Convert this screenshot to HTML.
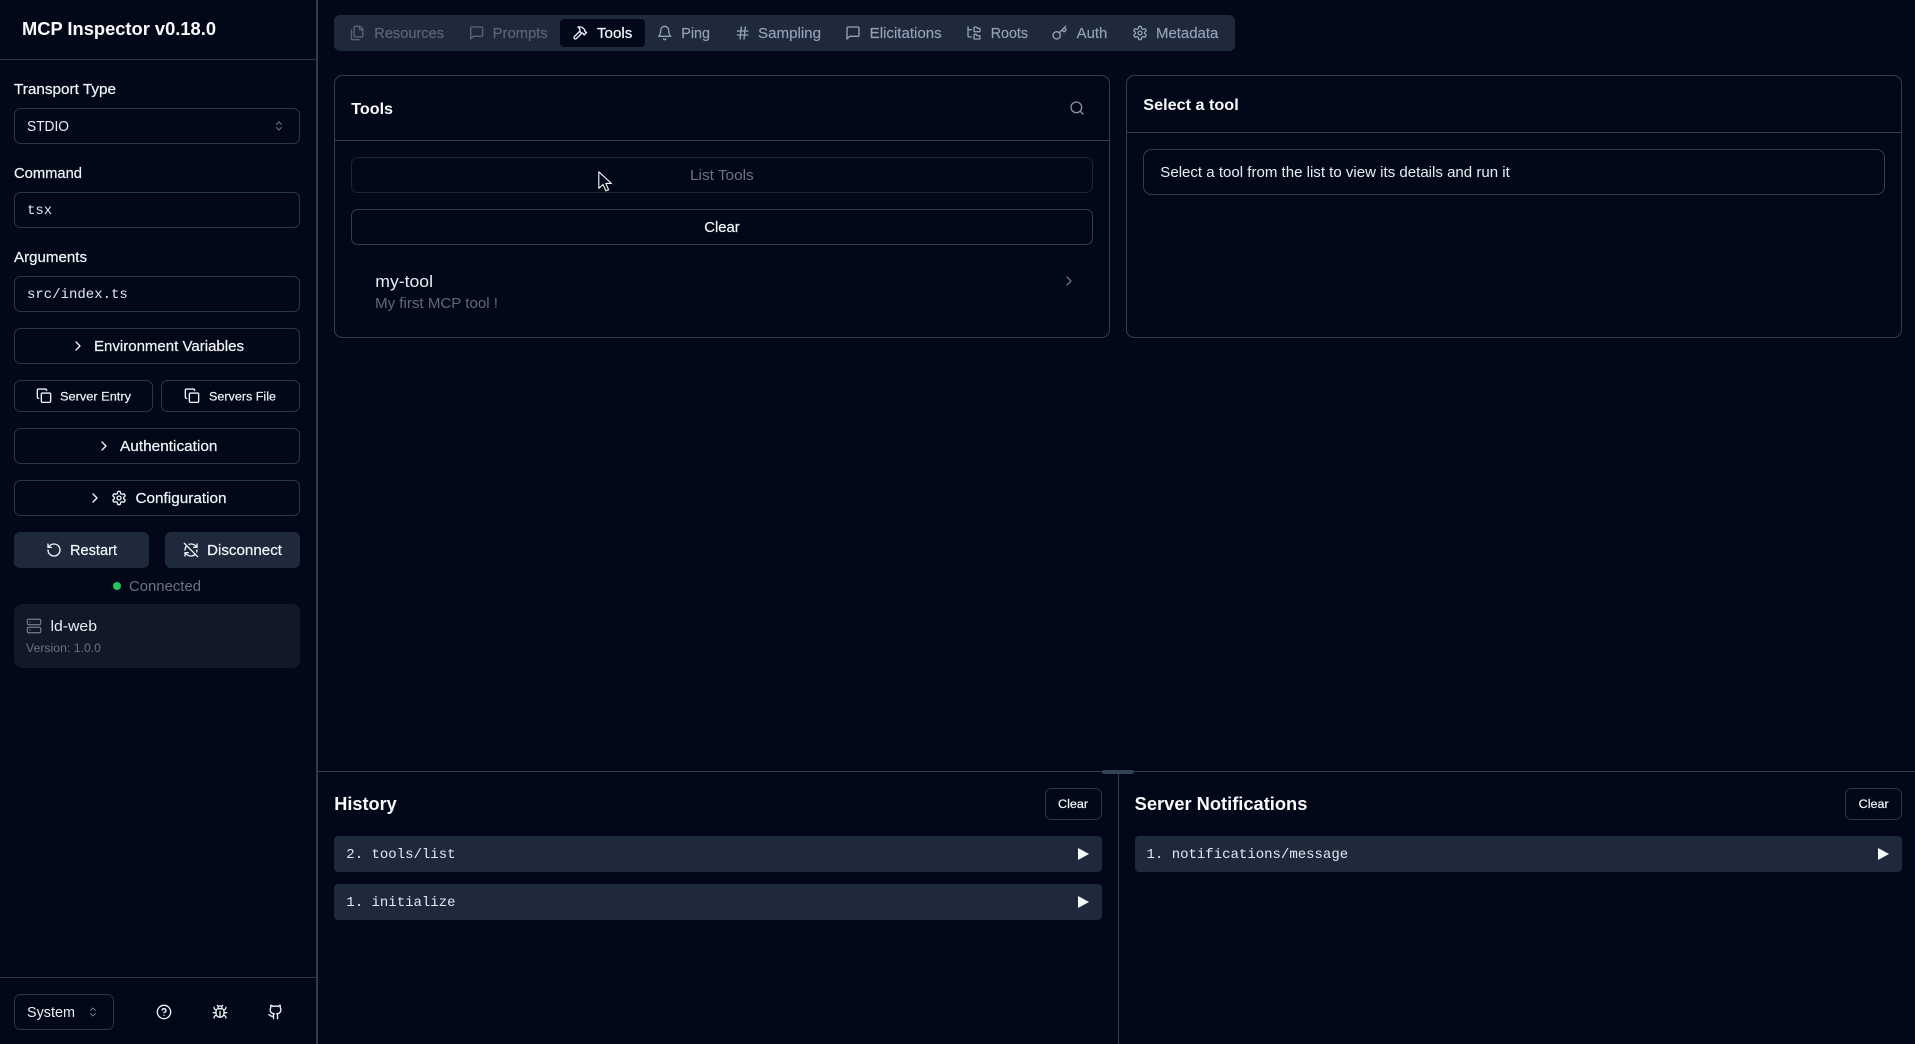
<!DOCTYPE html>
<html lang="en"><head><meta charset="utf-8"><title>MCP Inspector</title>
<style>
html,body{margin:0;padding:0;background:#020817;width:1915px;height:1044px;overflow:hidden}
svg{display:block}
text{font-family:"Liberation Sans",sans-serif;font-size:14.4px;fill:#e9eef4}
text.m{fill:#f1f5f9;stroke:#f1f5f9;stroke-width:.2px}
text.b{font-weight:700;fill:#f8fafc}
text.mono{font-family:"Liberation Mono",monospace;font-size:14px;fill:#e2e8f0}
text.s{font-size:12.3px}
.t{fill:#94a3b8;stroke:#94a3b8;stroke-width:.15px}
text.t{fill:#94a3b8}
text.td{fill:#5a6779;stroke:#5a6779;stroke-width:.15px}
.box{fill:none;stroke:#2b3647}
.card{fill:none;stroke:#323d50}
.ic{fill:none;stroke:currentColor;stroke-width:2;stroke-linecap:round;stroke-linejoin:round}
</style></head><body>
<svg xmlns="http://www.w3.org/2000/svg" width="1915" height="1044" viewBox="0 0 1915 1044">
<defs>
<symbol id="copy" viewBox="0 0 24 24"><rect class="ic" x="8" y="8" width="14" height="14" rx="2"/><path class="ic" d="M4 16c-1.1 0-2-.9-2-2V4c0-1.1.9-2 2-2h10c1.1 0 2 .9 2 2"/></symbol>
<symbol id="chev" viewBox="0 0 24 24"><path class="ic" d="m9 18 6-6-6-6"/></symbol>
<symbol id="updown" viewBox="0 0 24 24"><path class="ic" d="m7 15 5 5 5-5M7 9l5-5 5 5"/></symbol>
<symbol id="gear" viewBox="0 0 24 24"><path class="ic" d="M12.22 2h-.44a2 2 0 0 0-2 2v.18a2 2 0 0 1-1 1.73l-.43.25a2 2 0 0 1-2 0l-.15-.08a2 2 0 0 0-2.73.73l-.22.38a2 2 0 0 0 .73 2.73l.15.1a2 2 0 0 1 1 1.72v.51a2 2 0 0 1-1 1.74l-.15.09a2 2 0 0 0-.73 2.73l.22.38a2 2 0 0 0 2.73.73l.15-.08a2 2 0 0 1 2 0l.43.25a2 2 0 0 1 1 1.73V20a2 2 0 0 0 2 2h.44a2 2 0 0 0 2-2v-.18a2 2 0 0 1 1-1.73l.43-.25a2 2 0 0 1 2 0l.15.08a2 2 0 0 0 2.73-.73l.22-.39a2 2 0 0 0-.73-2.73l-.15-.08a2 2 0 0 1-1-1.74v-.5a2 2 0 0 1 1-1.74l.15-.09a2 2 0 0 0 .73-2.73l-.22-.38a2 2 0 0 0-2.73-.73l-.15.08a2 2 0 0 1-2 0l-.43-.25a2 2 0 0 1-1-1.73V4a2 2 0 0 0-2-2z"/><circle class="ic" cx="12" cy="12" r="3"/></symbol>
<symbol id="restart" viewBox="0 0 24 24"><path class="ic" d="M3 12a9 9 0 1 0 9-9 9.75 9.75 0 0 0-6.74 2.74L3 8"/><path class="ic" d="M3 3v5h5"/></symbol>
<symbol id="off" viewBox="0 0 24 24"><path class="ic" d="M21 8 18.74 5.74A9.75 9.75 0 0 0 12 3C11 3 10.03 3.16 9.13 3.47M8 16H3v5M3 12C3 9.51 4 7.26 5.64 5.64M3 16l2.26 2.26A9.75 9.75 0 0 0 12 21c2.49 0 4.74-1 6.36-2.64M21 12c0 1-.16 1.97-.47 2.87M21 3v5h-5M22 22 2 2"/></symbol>
<symbol id="server" viewBox="0 0 24 24"><rect class="ic" x="2" y="2" width="20" height="8" rx="2"/><rect class="ic" x="2" y="14" width="20" height="8" rx="2"/><path class="ic" d="M6 6h.01M6 18h.01"/></symbol>
<symbol id="help" viewBox="0 0 24 24"><circle class="ic" cx="12" cy="12" r="10"/><path class="ic" d="M9.09 9a3 3 0 0 1 5.83 1c0 2-3 3-3 3M12 17h.01"/></symbol>
<symbol id="bug" viewBox="0 0 24 24"><path class="ic" d="m8 2 1.88 1.88M14.12 3.88 16 2M9 7.13v-1a3.003 3.003 0 1 1 6 0v1M12 20c-3.3 0-6-2.7-6-6v-3a4 4 0 0 1 4-4h4a4 4 0 0 1 4 4v3c0 3.3-2.7 6-6 6M12 20v-9M6.53 9C4.6 8.8 3 7.1 3 5M6 13H2M3 21c0-2.1 1.7-3.9 3.8-4M20.97 5c0 2.1-1.6 3.8-3.5 4M22 13h-4M17.2 17c2.1.1 3.8 1.9 3.8 4"/></symbol>
<symbol id="github" viewBox="0 0 24 24"><path class="ic" d="M15 22v-4a4.8 4.8 0 0 0-1-3.5c3 0 6-2 6-5.5.08-1.25-.27-2.48-1-3.5.28-1.15.28-2.35 0-3.5 0 0-1 0-3 1.5-2.64-.5-5.36-.5-8 0C6 2 5 2 5 2c-.3 1.15-.3 2.35 0 3.5A5.403 5.403 0 0 0 4 9c0 3.5 3 5.5 6 5.5-.39.49-.68 1.05-.85 1.65-.17.6-.22 1.23-.15 1.85v4M9 18c-4.51 2-5-2-7-2"/></symbol>
<symbol id="files" viewBox="0 0 24 24"><path class="ic" d="M20 7h-3a2 2 0 0 1-2-2V2M9 18a2 2 0 0 1-2-2V4a2 2 0 0 1 2-2h7l4 4v10a2 2 0 0 1-2 2ZM3 7.6v12.8A1.6 1.6 0 0 0 4.6 22h9.8"/></symbol>
<symbol id="msg" viewBox="0 0 24 24"><path class="ic" d="M21 15a2 2 0 0 1-2 2H7l-4 4V5a2 2 0 0 1 2-2h14a2 2 0 0 1 2 2z"/></symbol>
<symbol id="hammer" viewBox="0 0 24 24"><path class="ic" d="m15 12-8.373 8.373a1 1 0 1 1-3-3L12 9M18 15l4-4M21.5 11.5l-1.914-1.914A2 2 0 0 1 19 8.172V7l-2.26-2.26a6 6 0 0 0-4.202-1.756L9 2.96l.92.82A6.18 6.18 0 0 1 12 8.4V10l2 2h1.172a2 2 0 0 1 1.414.586L18.5 14.5"/></symbol>
<symbol id="bell" viewBox="0 0 24 24"><path class="ic" d="M6 8a6 6 0 0 1 12 0c0 7 3 9 3 9H3s3-2 3-9M10.3 21a1.94 1.94 0 0 0 3.4 0"/></symbol>
<symbol id="hash" viewBox="0 0 24 24"><path class="ic" d="M4 9h16M4 15h16M10 3 8 21M16 3l-2 18"/></symbol>
<symbol id="tree" viewBox="0 0 24 24"><path class="ic" d="M20 10a1 1 0 0 0 1-1V6a1 1 0 0 0-1-1h-2.5a1 1 0 0 1-.8-.4l-.9-1.2A1 1 0 0 0 15 3h-2a1 1 0 0 0-1 1v5a1 1 0 0 0 1 1ZM20 21a1 1 0 0 0 1-1v-3a1 1 0 0 0-1-1h-2.9a1 1 0 0 1-.88-.55l-.42-.85a1 1 0 0 0-.92-.6H13a1 1 0 0 0-1 1v5a1 1 0 0 0 1 1ZM3 5a2 2 0 0 0 2 2h3M3 3v13a2 2 0 0 0 2 2h3"/></symbol>
<symbol id="key" viewBox="0 0 24 24"><path class="ic" d="m15.5 7.5 2.3 2.3a1 1 0 0 0 1.4 0l2.1-2.1a1 1 0 0 0 0-1.4L19 4M21 2l-9.6 9.6"/><circle class="ic" cx="7.5" cy="15.5" r="5.5"/></symbol>
<symbol id="search" viewBox="0 0 24 24"><circle class="ic" cx="11" cy="11" r="8"/><path class="ic" d="m21 21-4.3-4.3"/></symbol>
</defs>

<rect width="1915" height="1044" fill="#020817"/>

<!-- Sidebar -->
<g>
<rect x="316" y="0" width="2" height="1044" fill="#2f3a4d"/>
<rect x="0" y="59" width="316" height="1" fill="#2b3647"/>
<text class="b" x="22" y="35" style="font-size:18px" textLength="194" lengthAdjust="spacingAndGlyphs">MCP Inspector v0.18.0</text>

<text class="m" x="14" y="94" textLength="102" lengthAdjust="spacingAndGlyphs">Transport Type</text>
<rect class="box" x="14.5" y="108.5" width="285" height="35" rx="6"/>
<text x="27" y="131" textLength="42" lengthAdjust="spacingAndGlyphs">STDIO</text>
<use href="#updown" x="273" y="120" width="12" height="12" style="color:#6b7686"/>

<text class="m" x="14" y="178" textLength="68" lengthAdjust="spacingAndGlyphs">Command</text>
<rect class="box" x="14.5" y="192.5" width="285" height="35" rx="6"/>
<text class="mono" x="27" y="214">tsx</text>

<text class="m" x="14" y="262" textLength="73" lengthAdjust="spacingAndGlyphs">Arguments</text>
<rect class="box" x="14.5" y="276.5" width="285" height="35" rx="6"/>
<text class="mono" x="27" y="298">src/index.ts</text>

<rect class="box" x="14.5" y="328.5" width="285" height="35" rx="6"/>
<use href="#chev" x="70" y="338" width="16" height="16" style="color:#f1f5f9"/>
<text class="m" x="94" y="351" textLength="150" lengthAdjust="spacingAndGlyphs">Environment Variables</text>

<rect class="box" x="14.5" y="380.5" width="138" height="31" rx="6"/>
<use href="#copy" x="36" y="387.7" width="16" height="16" style="color:#f1f5f9"/>
<text class="m s" x="60" y="400.4" textLength="71" lengthAdjust="spacingAndGlyphs">Server Entry</text>
<rect class="box" x="161.5" y="380.5" width="138" height="31" rx="6"/>
<use href="#copy" x="184" y="387.7" width="16" height="16" style="color:#f1f5f9"/>
<text class="m s" x="209" y="400.4" textLength="67" lengthAdjust="spacingAndGlyphs">Servers File</text>

<rect class="box" x="14.5" y="428.5" width="285" height="35" rx="6"/>
<use href="#chev" x="96" y="438" width="16" height="16" style="color:#f1f5f9"/>
<text class="m" x="120" y="451" textLength="97.5" lengthAdjust="spacingAndGlyphs">Authentication</text>

<rect class="box" x="14.5" y="480.5" width="285" height="35" rx="6"/>
<use href="#chev" x="87" y="490" width="16" height="16" style="color:#f1f5f9"/>
<use href="#gear" x="111" y="490" width="16" height="16" style="color:#f1f5f9"/>
<text class="m" x="135.5" y="503" textLength="91" lengthAdjust="spacingAndGlyphs">Configuration</text>

<rect x="14" y="532" width="135" height="36" rx="6" fill="#1e293b"/>
<use href="#restart" x="46" y="542" width="16" height="16" style="color:#f1f5f9"/>
<text class="m" x="70" y="555" textLength="47" lengthAdjust="spacingAndGlyphs">Restart</text>
<rect x="165" y="532" width="135" height="36" rx="6" fill="#1e293b"/>
<use href="#off" x="183" y="542" width="16" height="16" style="color:#f1f5f9"/>
<text class="m" x="207" y="555" textLength="75" lengthAdjust="spacingAndGlyphs">Disconnect</text>

<circle cx="117" cy="586" r="4" fill="#22c55e"/>
<text x="129" y="591" textLength="72" lengthAdjust="spacingAndGlyphs" style="fill:#6b7280">Connected</text>

<rect x="14" y="604" width="286" height="64" rx="8" fill="#111827"/>
<use href="#server" x="26" y="618" width="16" height="16" style="color:#6b7280"/>
<text x="50.5" y="631" textLength="46.5" lengthAdjust="spacingAndGlyphs">ld-web</text>
<text class="s" x="26" y="652" textLength="75" lengthAdjust="spacingAndGlyphs" style="fill:#6b7280">Version: 1.0.0</text>

<rect x="0" y="977" width="316" height="1" fill="#2b3647"/>
<rect class="box" x="14.5" y="994.5" width="99" height="35" rx="6"/>
<text x="27" y="1017" textLength="48" lengthAdjust="spacingAndGlyphs">System</text>
<use href="#updown" x="87" y="1006" width="12" height="12" style="color:#6b7686"/>
<use href="#help" x="156" y="1004" width="16" height="16" style="color:#f1f5f9"/>
<use href="#bug" x="212" y="1004" width="16" height="16" style="color:#f1f5f9"/>
<use href="#github" x="267.5" y="1004" width="16" height="16" style="color:#f1f5f9"/>
</g>

<!-- Tabs -->
<g>
<rect x="334" y="15" width="901" height="36" rx="6" fill="#1e293b"/>
<rect x="560" y="19" width="85" height="28" rx="4" fill="#020817"/>
<use href="#files" x="349.5" y="25" width="16" height="16" style="color:#5a6779"/>
<text class="td" x="374.3" y="38" textLength="69.7" lengthAdjust="spacingAndGlyphs">Resources</text>
<use href="#msg" x="468.7" y="25" width="16" height="16" style="color:#5a6779"/>
<text class="td" x="492.7" y="38" textLength="55" lengthAdjust="spacingAndGlyphs">Prompts</text>
<use href="#hammer" x="572" y="25" width="16" height="16" style="color:#f1f5f9"/>
<text class="m" x="597" y="38" textLength="35.3" lengthAdjust="spacingAndGlyphs">Tools</text>
<use href="#bell" x="656.7" y="25" width="16" height="16" style="color:#94a3b8"/>
<text class="t" x="681.3" y="38" textLength="28.7" lengthAdjust="spacingAndGlyphs">Ping</text>
<use href="#hash" x="734.7" y="25" width="16" height="16" style="color:#94a3b8"/>
<text class="t" x="758" y="38" textLength="63" lengthAdjust="spacingAndGlyphs">Sampling</text>
<use href="#msg" x="845" y="25" width="16" height="16" style="color:#94a3b8"/>
<text class="t" x="869.7" y="38" textLength="72" lengthAdjust="spacingAndGlyphs">Elicitations</text>
<use href="#tree" x="966" y="25" width="16" height="16" style="color:#94a3b8"/>
<text class="t" x="990.7" y="38" textLength="37.3" lengthAdjust="spacingAndGlyphs">Roots</text>
<use href="#key" x="1051.7" y="25" width="16" height="16" style="color:#94a3b8"/>
<text class="t" x="1076.7" y="38" textLength="30.6" lengthAdjust="spacingAndGlyphs">Auth</text>
<use href="#gear" x="1132" y="25" width="16" height="16" style="color:#94a3b8"/>
<text class="t" x="1156" y="38" textLength="62.3" lengthAdjust="spacingAndGlyphs">Metadata</text>
</g>

<!-- Tools card -->
<g>
<rect class="card" x="334.5" y="75.5" width="775" height="262" rx="8"/>
<rect x="335" y="140" width="774" height="1" fill="#323d50"/>
<text class="b" x="351.3" y="114" style="font-size:16px" textLength="41.7" lengthAdjust="spacingAndGlyphs">Tools</text>
<use href="#search" x="1069" y="100" width="16" height="16" style="color:#8490a3"/>
<rect x="351.5" y="157.5" width="741" height="35" rx="6" fill="none" stroke="#1c2534"/>
<text x="690" y="180" textLength="63.7" lengthAdjust="spacingAndGlyphs" style="fill:#6b7280">List Tools</text>
<rect class="box" x="351.5" y="209.5" width="741" height="35" rx="6" style="stroke:#323d50"/>
<text class="m" x="704.3" y="232" textLength="35.4" lengthAdjust="spacingAndGlyphs">Clear</text>
<text x="375.3" y="287" style="font-size:16.3px" textLength="57.7" lengthAdjust="spacingAndGlyphs">my-tool</text>
<text x="375" y="308" textLength="123" lengthAdjust="spacingAndGlyphs" style="fill:#5f6877">My first MCP tool !</text>
<use href="#chev" x="1061" y="273" width="16" height="16" style="color:#6b7280"/>
</g>

<!-- Cursor -->
<path d="M598.8 171.8v16.6l4.2-3.9 2.9 6.4 2.7-1.2-2.8-6.3h5.6z" fill="#020817" stroke="#f8fafc" stroke-width="1.1" stroke-linejoin="round"/>

<!-- Select a tool card -->
<g>
<rect class="card" x="1126.5" y="75.5" width="775" height="262" rx="8"/>
<rect x="1127" y="132" width="774" height="1" fill="#323d50"/>
<text class="b" x="1143.3" y="110" style="font-size:16px" textLength="95.4" lengthAdjust="spacingAndGlyphs">Select a tool</text>
<rect class="card" x="1143.5" y="149.5" width="741" height="45" rx="8"/>
<text x="1160.3" y="177" textLength="349.5" lengthAdjust="spacingAndGlyphs">Select a tool from the list to view its details and run it</text>
</g>

<!-- Bottom panel -->
<g>
<rect x="318" y="771" width="1597" height="1" fill="#323d50"/>
<rect x="1102" y="770" width="32" height="4" rx="2" fill="#334155"/>
<rect x="1118" y="772" width="1" height="272" fill="#323d50"/>

<text class="b" x="334.3" y="810" style="font-size:18px" textLength="62.4" lengthAdjust="spacingAndGlyphs">History</text>
<rect class="box" x="1045.5" y="788.5" width="56" height="31" rx="6"/>
<text class="m s" x="1058" y="808" textLength="30" lengthAdjust="spacingAndGlyphs">Clear</text>
<rect x="334" y="836" width="768" height="36" rx="4" fill="#1e293b"/>
<text class="mono" x="346.3" y="858">2. tools/list</text>
<polygon points="1078,848 1089,854 1078,860" fill="#f8fafc"/>
<rect x="334" y="884" width="768" height="36" rx="4" fill="#1e293b"/>
<text class="mono" x="346.3" y="906">1. initialize</text>
<polygon points="1078,896 1089,902 1078,908" fill="#f8fafc"/>

<text class="b" x="1134.7" y="810" style="font-size:18px" textLength="172.7" lengthAdjust="spacingAndGlyphs">Server Notifications</text>
<rect class="box" x="1845.5" y="788.5" width="56" height="31" rx="6"/>
<text class="m s" x="1858.7" y="808" textLength="30" lengthAdjust="spacingAndGlyphs">Clear</text>
<rect x="1135" y="836" width="767" height="36" rx="4" fill="#1e293b"/>
<text class="mono" x="1146.5" y="858">1. notifications/message</text>
<polygon points="1878,848 1889,854 1878,860" fill="#f8fafc"/>
</g>
</svg>
</body></html>
